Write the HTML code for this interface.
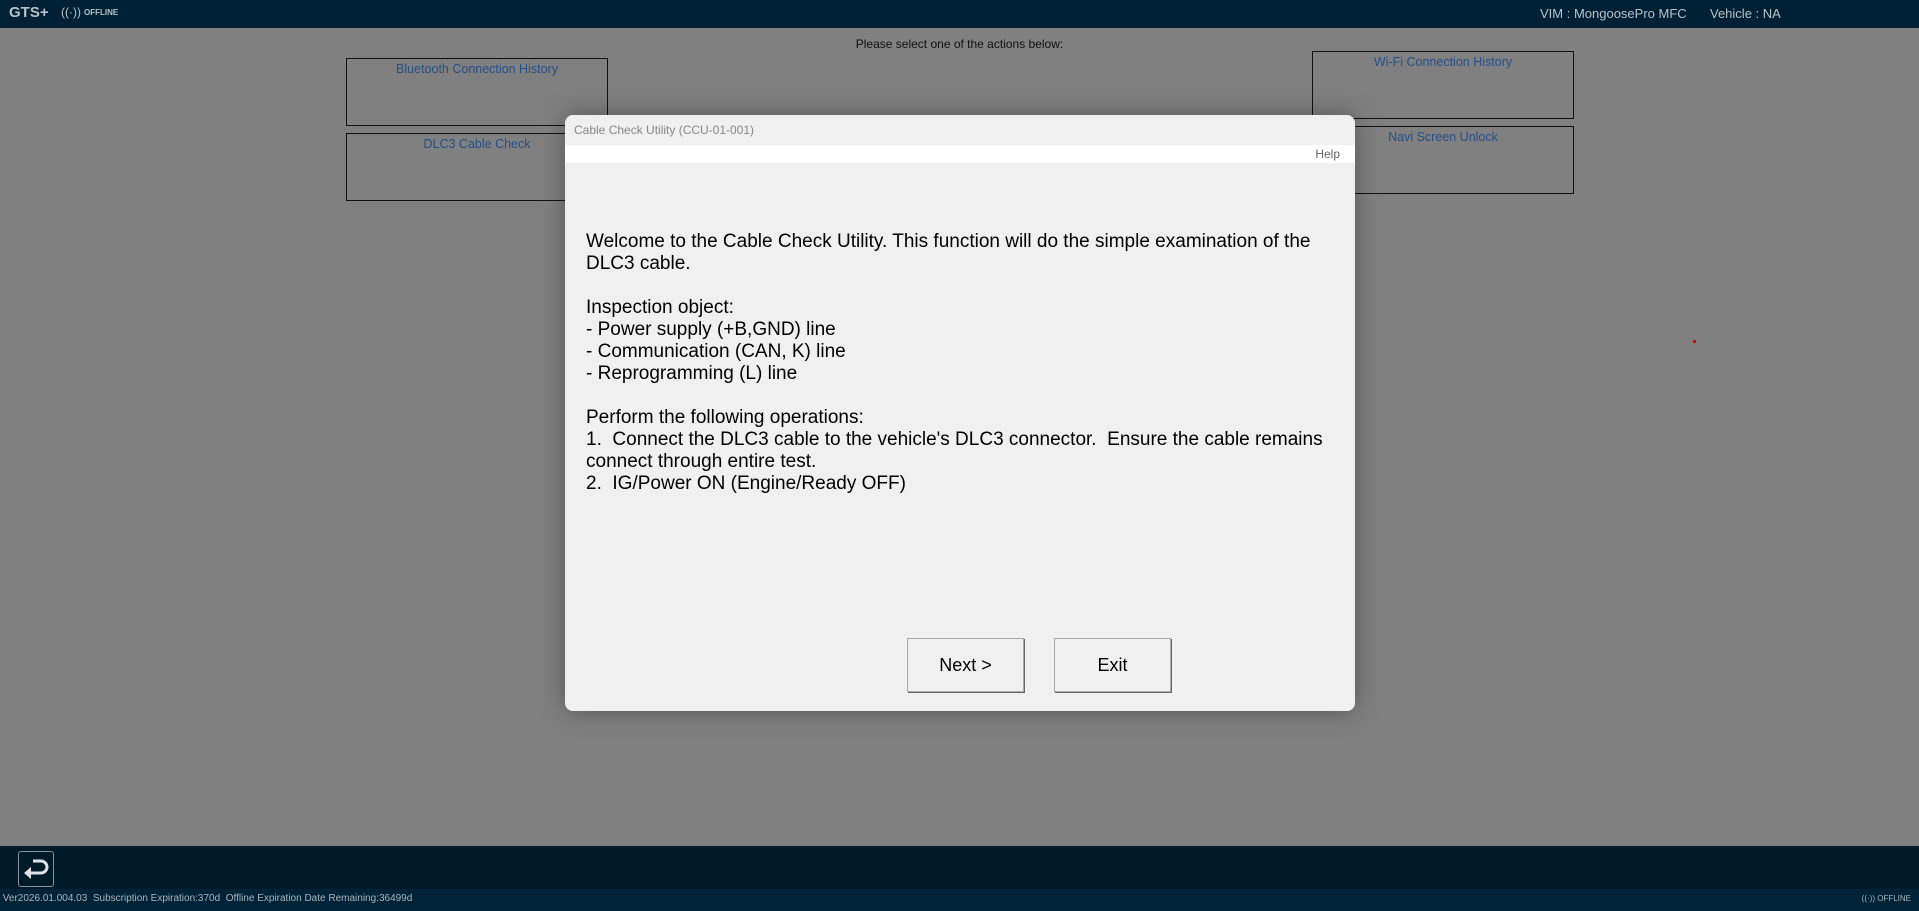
<!DOCTYPE html>
<html><head><meta charset="utf-8"><style>
body{margin:0;width:1919px;height:911px;background:#808080;position:relative;overflow:hidden;font-family:"Liberation Sans",sans-serif}
.top{position:absolute;left:0;top:0;width:1919px;height:28px;background:#002035;color:#b8c2c8}
.box{position:absolute;border:1.5px solid #111;box-sizing:border-box;text-align:center;color:#24508c;font-size:12.5px;padding-top:3px}
.dlg{position:absolute;left:565px;top:115px;width:790px;height:596px;background:#f0f0f0;border-radius:8px;box-shadow:0 0 25px rgba(0,0,0,.35);overflow:hidden}
.btn{position:absolute;top:523px;width:115px;height:52px;background:#f0f0f0;border:1px solid #aaa;box-shadow:1px 1px 0 #666;font-size:18px;text-align:center;line-height:52px;color:#000}
</style></head><body>
<div class="top">
<span style="position:absolute;left:9px;top:4px;font-weight:bold;font-size:15px">GTS+</span>
<span style="position:absolute;left:61px;top:5px;font-size:12px">((·))</span>
<span style="position:absolute;left:84px;top:8px;font-size:8px;font-weight:bold">OFFLINE</span>
<span style="position:absolute;left:1540px;top:6px;font-size:13px">VIM : MongoosePro MFC</span>
<span style="position:absolute;left:1710px;top:6px;font-size:13px">Vehicle : NA</span>
</div>
<div style="position:absolute;left:0;width:1919px;top:37px;text-align:center;font-size:12px;color:#111">Please select one of the actions below:</div>
<div class="box" style="left:346px;top:58px;width:262px;height:68px">Bluetooth Connection History</div>
<div class="box" style="left:346px;top:133px;width:262px;height:68px">DLC3 Cable Check</div>
<div class="box" style="left:1312px;top:51px;width:262px;height:68px">Wi-Fi Connection History</div>
<div class="box" style="left:1312px;top:126px;width:262px;height:68px">Navi Screen Unlock</div>
<div style="position:absolute;left:1693px;top:340px;width:3px;height:3px;background:#d00"></div>
<div class="dlg">
<div style="height:30px;line-height:30px;padding-left:9px;font-size:12px;color:#888">Cable Check Utility (CCU-01-001)</div>
<div style="height:18px;background:#fff;text-align:right;padding-right:15px;font-size:12px;color:#666;line-height:18px">Help</div>
<div style="position:absolute;left:21px;top:116px;font-size:19px;line-height:22px;color:#000;width:750px">Welcome to the Cable Check Utility. This function will do the simple examination of the DLC3 cable.<br><br>Inspection object:<br>- Power supply (+B,GND) line<br>- Communication (CAN, K) line<br>- Reprogramming (L) line<br><br>Perform the following operations:<br>1.&nbsp; Connect the DLC3 cable to the vehicle's DLC3 connector.&nbsp; Ensure the cable remains connect through entire test.<br>2.&nbsp; IG/Power ON (Engine/Ready OFF)</div>
<div class="btn" style="left:342px">Next &gt;</div>
<div class="btn" style="left:489px">Exit</div>
</div>
<div style="position:absolute;left:0;top:846px;width:1919px;height:43px;background:#001a2a"></div>
<div style="position:absolute;left:18px;top:851px;width:36px;height:36px;border:1.5px solid #8a9399;border-radius:3px;box-sizing:border-box">
<svg width="33" height="33" viewBox="0 0 33 33"><path d="M14 9h8a6 6 0 0 1 0 12H10" fill="none" stroke="#dfe4e7" stroke-width="3"/><path d="M5 21l7-6v12z" fill="#dfe4e7"/></svg></div>
<div style="position:absolute;left:0;top:889px;width:1919px;height:22px;background:#002338;color:#aab4ba;font-size:10px;line-height:20px">&nbsp;Ver2026.01.004.03&nbsp; Subscription Expiration:370d&nbsp; Offline Expiration Date Remaining:36499d
<span style="position:absolute;right:8px;top:0;font-size:8px">((·)) OFFLINE</span></div>
</body></html>
